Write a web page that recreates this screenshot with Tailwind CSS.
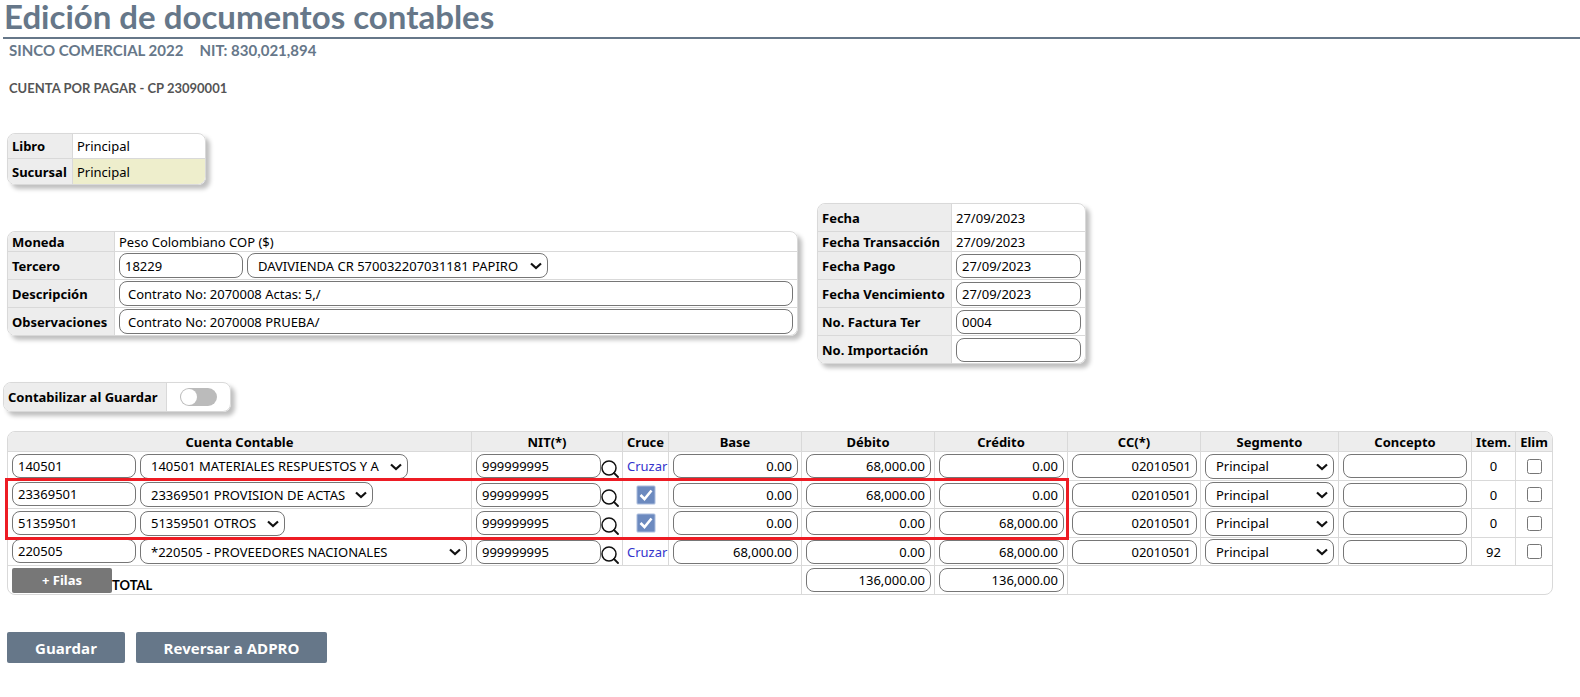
<!DOCTYPE html>
<html lang="es">
<head>
<meta charset="utf-8">
<title>Edición de documentos contables</title>
<script src="https://cdn.jsdelivr.net/npm/@tailwindcss/browser@4"></script>
</head>
<body class="bg-white font-['Noto_Sans','Open_Sans',sans-serif] text-[13px] leading-[18px] text-black">
<svg class="hidden" aria-hidden="true">
  <symbol id="lupa" viewBox="0 0 18 18"><circle cx="8" cy="8" r="7" fill="none" stroke="#111" stroke-width="1.5"/><path d="M13 13l4 4" stroke="#111" stroke-width="1.8" stroke-linecap="round"/></symbol>
  <symbol id="marca" viewBox="0 0 20 20"><rect x=".5" y=".5" width="19" height="19" rx="1.5" fill="#a9bbdc"/><rect x="1.5" y="1.5" width="17" height="17" rx="1" fill="#6c8abf"/><path d="M4.5 10l4 4L15.5 5.500" fill="none" stroke="#fff" stroke-width="2.6"/></symbol>
  <symbol id="flecha" viewBox="0 0 12 8"><path d="M1 1.500l5 4.500l5-4.500" fill="none" stroke="#111" stroke-width="2.200"/></symbol>
</svg>
<header class="pl-[3px] text-[#667789]">
  <h1 class="h-[39px] border-b-2 border-[#667789] pl-px font-['Lato',sans-serif] text-[33px] leading-[32px] font-bold">Edición de documentos contables</h1>
  <h2 class="flex gap-4 pl-[6px] font-['Lato',sans-serif] text-[15px] leading-[22px] font-bold"><span>SINCO COMERCIAL 2022</span><span>NIT: 830,021,894</span></h2>
  <h3 class="mt-[17px] pl-[6px] font-['Lato',sans-serif] text-[13px] leading-5 font-bold text-[#555]">CUENTA POR PAGAR - CP 23090001</h3>
</header>
<main class="pt-[35px] pl-[7px]">
  <div class="w-[199px] overflow-hidden rounded-lg border border-[#d9d9d9] shadow-[4px_4px_4px_rgba(0,0,0,0.25)]">
    <table class="w-full border-separate border-spacing-0">
      <tr class="h-[25px]"><th class="w-[65px] border-r border-b border-[#d9d9d9] bg-[#ededed] px-1 py-0 text-left">Libro</th><td class="border-b border-[#d9d9d9] px-1 py-0">Principal</td></tr>
      <tr class="h-[25px]"><th class="border-r border-[#d9d9d9] bg-[#ededed] px-1 py-0 text-left">Sucursal</th><td class="bg-[#eeeecc] px-1 py-0">Principal</td></tr>
    </table>
  </div>

  <div class="mt-[18px] flex items-center gap-[19px]">
    <div class="w-[791px] shrink overflow-hidden rounded-lg border border-[#d9d9d9] shadow-[4px_4px_4px_rgba(0,0,0,0.25)]">
      <table class="w-full border-separate border-spacing-0">
        <tr class="h-5"><th class="w-[107px] border-r border-b border-[#d9d9d9] bg-[#ededed] px-1 py-0 text-left">Moneda</th><td class="border-b border-[#d9d9d9] px-1 py-0">Peso Colombiano COP ($)</td></tr>
        <tr class="h-7"><th class="border-r border-b border-[#d9d9d9] bg-[#ededed] px-1 py-0 text-left"><label for="tercero">Tercero</label></th><td class="border-b border-[#d9d9d9] px-1 py-0"><div class="flex gap-1"><input id="tercero" value="18229" class="h-[25px] w-[124px] rounded-lg border border-[#767676] px-[5px]"><div class="relative w-[301px]"><select aria-label="Nombre del tercero" class="block h-[25px] w-full appearance-none rounded-lg border border-[#767676] bg-white pl-[10px]"><option>DAVIVIENDA CR 570032207031181 PAPIRO</option></select><svg class="pointer-events-none absolute top-[9px] right-[6px] h-2 w-3"><use href="#flecha"/></svg></div></div></td></tr>
        <tr class="h-7"><th class="border-r border-b border-[#d9d9d9] bg-[#ededed] px-1 py-0 text-left"><label for="descripcion">Descripción</label></th><td class="border-b border-[#d9d9d9] px-1 py-0"><input id="descripcion" value="Contrato No: 2070008 Actas: 5,/" class="block h-[25px] w-full rounded-lg border border-[#767676] px-2"></td></tr>
        <tr class="h-[27px]"><th class="border-r border-[#d9d9d9] bg-[#ededed] px-1 py-0 text-left"><label for="observaciones">Observaciones</label></th><td class="px-1 py-0"><input id="observaciones" value="Contrato No: 2070008 PRUEBA/" class="block h-[25px] w-full rounded-lg border border-[#767676] px-2"></td></tr>
      </table>
    </div>
    <div class="w-[269px] shrink-0 overflow-hidden rounded-lg border border-[#d9d9d9] shadow-[4px_4px_4px_rgba(0,0,0,0.25)]">
      <table class="w-full border-separate border-spacing-0">
        <tr class="h-7"><th class="w-[135px] border-r border-b border-[#d9d9d9] bg-[#ededed] px-1 py-0 text-left">Fecha</th><td class="border-b border-[#d9d9d9] px-1 py-0">27/09/2023</td></tr>
        <tr class="h-5"><th class="border-r border-b border-[#d9d9d9] bg-[#ededed] px-1 py-0 text-left">Fecha Transacción</th><td class="border-b border-[#d9d9d9] px-1 py-0">27/09/2023</td></tr>
        <tr class="h-7"><th class="border-r border-b border-[#d9d9d9] bg-[#ededed] px-1 py-0 text-left"><label for="pago">Fecha Pago</label></th><td class="border-b border-[#d9d9d9] px-1 py-0"><input id="pago" value="27/09/2023" class="block h-6 w-[125px] rounded-lg border border-[#767676] px-[5px]"></td></tr>
        <tr class="h-7"><th class="border-r border-b border-[#d9d9d9] bg-[#ededed] px-1 py-0 text-left whitespace-nowrap"><label for="vence">Fecha Vencimiento</label></th><td class="border-b border-[#d9d9d9] px-1 py-0"><input id="vence" value="27/09/2023" class="block h-6 w-[125px] rounded-lg border border-[#767676] px-[5px]"></td></tr>
        <tr class="h-7"><th class="border-r border-b border-[#d9d9d9] bg-[#ededed] px-1 py-0 text-left"><label for="factura">No. Factura Ter</label></th><td class="border-b border-[#d9d9d9] px-1 py-0"><input id="factura" value="0004" class="block h-6 w-[125px] rounded-lg border border-[#767676] px-[5px]"></td></tr>
        <tr class="h-[27px]"><th class="border-r border-[#d9d9d9] bg-[#ededed] px-1 py-0 text-left"><label for="importacion">No. Importación</label></th><td class="px-1 py-0"><input id="importacion" class="block h-6 w-[125px] rounded-lg border border-[#767676] px-[5px]"></td></tr>
      </table>
    </div>
  </div>

  <div class="mt-[18px] -ml-1 flex h-[30px] w-[228px] overflow-hidden rounded-lg border border-[#d9d9d9] shadow-[4px_4px_4px_rgba(0,0,0,0.25)]">
    <label for="contabilizar" class="flex w-[163px] items-center border-r border-[#d9d9d9] bg-[#ededed] pl-1 font-bold whitespace-nowrap">Contabilizar al Guardar</label>
    <div class="flex flex-1 items-center justify-center">
      <input id="contabilizar" type="checkbox" role="switch" class="h-[18px] w-[37px] appearance-none rounded-full bg-[#bbb] before:m-px before:block before:size-4 before:rounded-full before:bg-white checked:bg-[#667789] checked:before:ml-5">
    </div>
  </div>

  <div class="relative mt-[19px] mr-[27px]">
    <div class="overflow-hidden rounded-lg border border-[#d9d9d9]">
      <table class="w-full table-fixed border-separate border-spacing-0 [&_tr>*]:border-[#d9d9d9] [&_tr>*]:px-1 [&_tr>*]:py-0 [&_tr>*:not(:last-child)]:border-r [&_tr:not(:last-child)>*]:border-b">
        <colgroup><col><col class="w-[151px]"><col class="w-[46px]"><col class="w-[133px]"><col class="w-[133px]"><col class="w-[133px]"><col class="w-[133px]"><col class="w-[138px]"><col class="w-[133px]"><col class="w-[44px]"><col class="w-[36px]"></colgroup>
        <tbody>
          <tr class="h-5 bg-[#ededed]"><th>Cuenta Contable</th><th>NIT(*)</th><th>Cruce</th><th>Base</th><th>Débito</th><th>Crédito</th><th>CC(*)</th><th>Segmento</th><th>Concepto</th><th>Item.</th><th>Elim</th></tr>
          <tr id="total" class="h-7">
            <td colspan="4"><div class="flex items-end"><button type="button" class="h-[25px] w-[100px] rounded-xs bg-[#777] font-bold text-white">+ Filas</button><span class="font-['Lato',sans-serif] leading-4 font-bold">TOTAL</span></div></td>
            <td><input aria-label="Total débito" value="136,000.00" class="block h-6 w-[125px] rounded-lg border border-[#767676] px-[5px] text-right"></td>
            <td><input aria-label="Total crédito" value="136,000.00" class="block h-6 w-[125px] rounded-lg border border-[#767676] px-[5px] text-right"></td>
            <td colspan="5"></td>
          </tr>
        </tbody>
      </table>
    </div>
    <div class="pointer-events-none absolute top-[47px] right-[484px] -left-[2px] h-[62px] border-3 border-[#ed1c24]"></div>
  </div>

  <div class="mt-[37px] flex gap-[11px] font-['Open_Sans',sans-serif]">
    <button type="button" class="h-[31px] w-[118px] rounded-xs bg-[#667789] text-[15px] font-bold text-white">Guardar</button>
    <button type="button" class="h-[31px] w-[191px] rounded-xs bg-[#667789] text-[15px] font-bold text-white">Reversar a ADPRO</button>
  </div>
</main>
<script>
const filas = [
  ["140501", "140501 MATERIALES RESPUESTOS Y A", "w-[268px]", false, "0.00", "68,000.00", "0.00", "0", "h-[29px]"],
  ["23369501", "23369501 PROVISION DE ACTAS", "w-[233px]", true, "0.00", "68,000.00", "0.00", "0", "h-7"],
  ["51359501", "51359501 OTROS", "w-[145px]", true, "0.00", "0.00", "68,000.00", "0", "h-[29px]"],
  ["220505", "*220505 - PROVEEDORES NACIONALES", "flex-1", false, "68,000.00", "0.00", "68,000.00", "92", "h-7"]
];
const campo = (nombre, valor, extra) => `<input aria-label="${nombre}" value="${valor}" class="block h-6 rounded-lg border border-[#767676] px-[5px] ${extra}">`;
const lista = (nombre, valor, ancho) => `<div class="relative ${ancho}"><select aria-label="${nombre}" class="block h-[25px] w-full appearance-none rounded-lg border border-[#767676] bg-white pl-[10px]"><option>${valor}</option></select><svg class="pointer-events-none absolute top-[9px] right-[6px] h-2 w-3"><use href="#flecha"/></svg></div>`;
document.getElementById("total").insertAdjacentHTML("beforebegin", filas.map(([cta, desc, ancho, cruce, base, deb, cred, item, alto]) => `
  <tr class="${alto}">
    <td><div class="flex gap-1">${campo("Cuenta", cta, "w-[124px]")}${lista("Cuenta contable", desc, ancho)}</div></td>
    <td><div class="flex items-end">${campo("NIT", "999999995", "w-[125px]")}<button type="button" aria-label="Buscar" class="shrink-0"><svg class="size-[18px]"><use href="#lupa"/></svg></button></div></td>
    <td class="text-center">${cruce ? `<svg class="mx-auto size-5" role="img" aria-label="Cruzado"><use href="#marca"/></svg>` : `<a href="#" class="text-[#3333cc]">Cruzar</a>`}</td>
    <td>${campo("Base", base, "w-[125px] text-right")}</td>
    <td>${campo("Débito", deb, "w-[125px] text-right")}</td>
    <td>${campo("Crédito", cred, "w-[125px] text-right")}</td>
    <td>${campo("CC", "02010501", "w-[125px] text-right")}</td>
    <td>${lista("Segmento", "Principal", "w-[129px]")}</td>
    <td>${campo("Concepto", "", "w-[124px]")}</td>
    <td class="text-center">${item}</td>
    <td class="text-center"><input type="checkbox" aria-label="Eliminar" class="mx-auto block size-[15px]"></td>
  </tr>`).join(""));
</script>
</body>
</html>
